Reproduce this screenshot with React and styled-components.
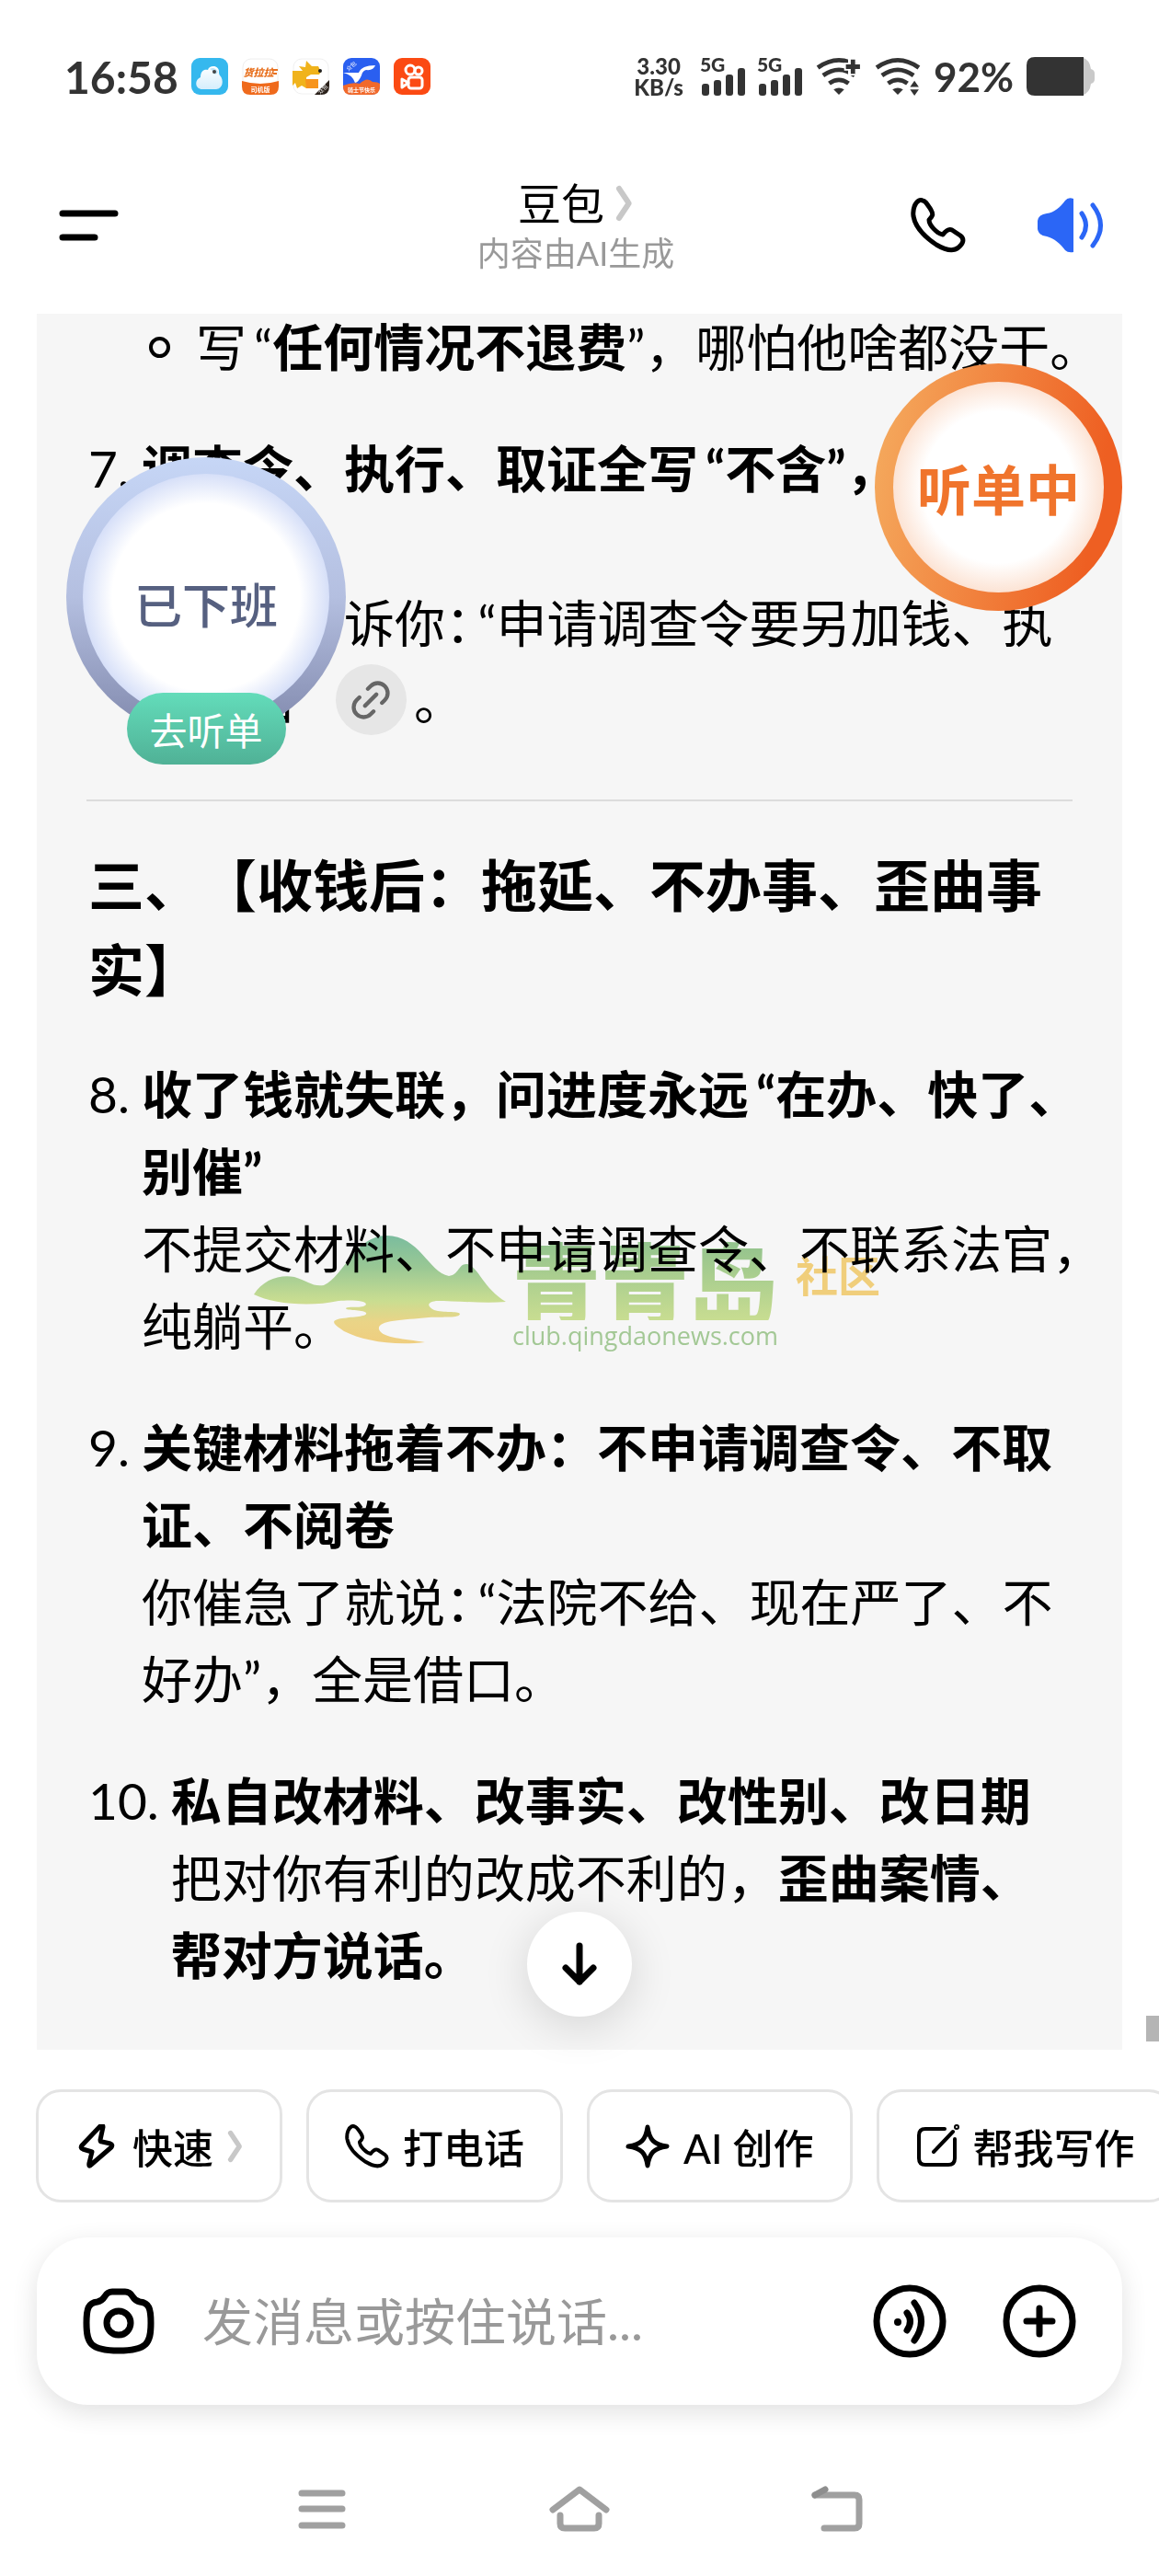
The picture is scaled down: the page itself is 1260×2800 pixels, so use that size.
import styled, { createGlobalStyle } from 'styled-components';
import { Link2 } from 'lucide-react';

const GlobalStyle = createGlobalStyle`
   * { box-sizing: border-box; }
   body {
      margin: 0;
      background: #fff;
      color: #000;
      font-family: Lato, "Noto Sans CJK SC", sans-serif;
      text-spacing-trim: space-all;
   }
   button, input { font-family: inherit; color: inherit; }
`;

const Chevron= ({ _height })=> (
   <svg width={_height / 2} height={_height} viewBox="0 0 20 40" fill="none" stroke="#c8c8c8" strokeWidth="6" strokeLinecap="round" strokeLinejoin="round">
      <path d="M4 4 L14 19 Q15 20 14 21 L4 36" />
   </svg>
);

const Phone= ({ _size, _stroke })=> (
   <svg width={_size} height={_size} viewBox="0 0 60 60" fill="none" stroke="currentColor" strokeWidth={_stroke} strokeLinejoin="round">
      <path d="M13 3 C16 3 18 7 22 13 C25 18 24 20 20 24 C20 30 29 39 35 40 C38 36 41 33 45 35 L54 41 C59 45 57 50 52 54 C46 59 38 57 28 51 C16 43 5 32 3 20 C2 12 5 5 9 3 Q11 2 13 3Z" />
   </svg>
);

const Signal= ()=> (
   <SignalBox>
      <SignalLabel>5G</SignalLabel>
      <svg width="48" height="30" viewBox="0 0 48 30" fill="#333">
         <rect x="0" y="17" width="8" height="13" rx="3" />
         <rect x="13" y="13" width="8" height="17" rx="3" />
         <rect x="26" y="7" width="8" height="23" rx="3" />
         <rect x="39" y="0" width="8" height="30" rx="3" />
      </svg>
   </SignalBox>
);

const Wifi= ({ _plus })=> (
   <svg width="50" height="42" viewBox="0 0 52 44" fill="none" stroke="#333" strokeWidth="5">
      <path d="M2 12 Q26 -5 50 12" />
      <path d="M8 21 Q26 8 44 21" />
      <path d="M15 30 Q26 22 37 30" />
      <path d="M20 37 Q26 33 32 37 L26 43Z" fill="#333" stroke="none" />
      {
         _plus &&
         <>
            <path d="M41 0 V21 M32 11 H52" stroke="#fff" strokeWidth="9" />
            <path d="M42 3 V19 M34 11 H50" />
         </>
      }
      {
         !_plus &&
         <path d="M40 34 L45 27 L50 34Z M40 37 H50 L45 44Z" fill="#333" stroke="none" />
      }
   </svg>
);

const App= ()=> (
   <Page>
      <GlobalStyle />
      <StatusBar>
         <StatusGroup>
            <Clock>16:58</Clock>
            <AppIcons>
               <svg width="40" height="40" viewBox="0 0 40 40">
                  <defs>
                     <linearGradient id="cloud" x1="0" y1="0" x2="0" y2="1">
                        <stop offset="0" stopColor="#fff" />
                        <stop offset="1" stopColor="#d5eefc" />
                     </linearGradient>
                  </defs>
                  <rect width="40" height="40" rx="9" fill="#35b8ee" />
                  <path d="M12 34 C4 34 3 24 10 21 C10 14 14 12 18 13 C19 8 29 7 30 14 C30 16 30 18 31 19 C36 24 34 34 27 34Z" fill="url(#cloud)" />
                  <path d="M20 12 Q25 9 29 15 Q27 19 24 17 Q23 13 20 12Z" fill="#bfe3f6" />
                  <circle cx="25" cy="15" r="2" fill="#444" />
               </svg>
               <svg width="40" height="40" viewBox="0 0 40 40">
                  <rect x="1" y="1" width="38" height="38" rx="9" fill="#fff" stroke="#eee" />
                  <path d="M0 25 Q20 31 40 25 V31 Q40 40 31 40 H9 Q0 40 0 31Z" fill="#ef6a1c" />
                  <text x="18" y="20" fontSize="11" fontWeight="900" fontStyle="italic" textAnchor="middle" fill="#e8701e">货拉拉</text>
                  <path d="M33 13 H39 M34 17 H38" stroke="#e8701e" strokeWidth="2" />
                  <text x="20" y="37" fontSize="7" fontWeight="700" textAnchor="middle" fill="#fff">司机版</text>
               </svg>
               <svg width="40" height="40" viewBox="0 0 40 40">
                  <rect x="1" y="1" width="38" height="38" rx="9" fill="#fff" stroke="#f0f0f0" />
                  <path d="M0 14 H11 L7 9 L14 10 L15 3 L21 9 L28 9 L31 15 L29 18 L20 18 L15 21 V33 L10 30 L5 33 L3 27 L0 30Z" fill="#f0b31c" />
                  <path d="M14 23 H28 V33 H15Z" fill="#f7941d" />
                  <circle cx="30" cy="14" r="2" fill="#222" />
                  <path d="M40 24 V31 Q40 40 31 40 H24 Z" fill="#2a211a" />
                  <text x="33" y="36" fontSize="6" transform="rotate(-45 33 34)" textAnchor="middle" fill="#fff">众包</text>
               </svg>
               <svg width="40" height="40" viewBox="0 0 40 40">
                  <rect width="40" height="40" rx="9" fill="#2a5ff0" />
                  <path d="M0 30 Q10 26 18 28 Q26 20 32 26 Q38 26 40 28 V31 Q40 40 31 40 H9 Q0 40 0 31Z" fill="#f1692b" />
                  <path d="M0 16 H17 Q20 8 35 8 Q33 14 25 13 Q21 14 20 19 Q17 26 13 27 Q10 18 0 16Z" fill="#fff" />
                  <text x="9" y="11" fontSize="6" transform="rotate(-40 9 9)" textAnchor="middle" fill="#fff">众包</text>
                  <text x="20" y="37" fontSize="6" fontWeight="700" textAnchor="middle" fill="#fff">骑士节快乐</text>
               </svg>
               <svg width="40" height="40" viewBox="0 0 40 40" fill="none" stroke="#fff" strokeWidth="3" strokeLinejoin="round">
                  <rect width="40" height="40" rx="9" fill="#fb4a13" stroke="none" />
                  <circle cx="18" cy="13" r="5" />
                  <circle cx="27" cy="14" r="4" />
                  <rect x="16" y="21" width="15" height="12" rx="3" />
                  <path d="M16 27 L9 23 V32 Z" />
               </svg>
            </AppIcons>
         </StatusGroup>
         <StatusGroup>
            <Speed><span>3.30</span><span>KB/s</span></Speed>
            <Signal />
            <Signal />
            <Wifi _plus={true} />
            <Wifi />
            <Percent>92%</Percent>
            <svg width="74" height="42" viewBox="0 0 74 42">
               <path d="M60 0 Q69 3 70 13 Q74 14 74 18 V24 Q74 28 70 29 Q69 39 60 42Z" fill="#c9c9c9" />
               <path d="M9 0 H62 V42 H9 Q0 42 0 33 V9 Q0 0 9 0Z" fill="#333" />
            </svg>
         </StatusGroup>
      </StatusBar>

      <Header>
         <IconButton aria-label="菜单">
            <svg width="78" height="34" viewBox="-12 0 78 34" stroke="#000" strokeWidth="7" strokeLinecap="round">
               <path d="M4 4 H61 M4 30 H39" />
            </svg>
         </IconButton>
         <TitleBlock>
            <Title>豆包<Chevron _height={40} /></Title>
            <Subtitle>内容由AI生成</Subtitle>
         </TitleBlock>
         <HeaderActions>
            <IconButton aria-label="打电话"><Phone _size={60} _stroke={5} /></IconButton>
            <IconButton aria-label="朗读">
               <svg width="72" height="60" viewBox="0 0 72 60" fill="none" stroke="#2b66f6" strokeWidth="5" strokeLinecap="round">
                  <path d="M10 17 Q1 18 0 25 V34 Q1 41 10 42 C18 44 25 50 30 57 Q33 60 39 59 V1 Q33 -1 30 3 C25 10 18 16 10 17Z" fill="#2b66f6" stroke="none" />
                  <path d="M48 17 Q57 30 48 43" />
                  <path d="M60 8 Q77 30 60 52" />
               </svg>
            </IconButton>
         </HeaderActions>
      </Header>

      <ChatArea>
         <Message>
            <BulletRow>
               <Bullet />
               <p>写<Quote $open>“</Quote><b>任何情况不退费</b><Quote>”</Quote>，哪怕他啥都没干。</p>
            </BulletRow>
            <List>
               <Item>
                  <span>7.</span>
                  <p>
                     <b>调查令、执行、取证全写<Quote $open>“</Quote>不含<Quote>”</Quote>，<br />后期再</b><br />
                     签完才告诉你<HalfWidth>：</HalfWidth><Quote $open>“</Quote>申请调查令要另加钱、执<br />
                     行另加<LinkChip href="#source" aria-label="来源"><Link2 size={52} strokeWidth={2} color="#666" /></LinkChip>。
                  </p>
               </Item>
            </List>
            <Divider />
            <SectionTitle>三、【收钱后：拖延、不办事、歪曲事<br />实】</SectionTitle>
            <List>
               <Item>
                  <span>8.</span>
                  <p>
                     <b>收了钱就失联，问进度永远<Quote $open>“</Quote>在办、快了、<br />别催<Quote>”</Quote></b><br />
                     不提交材料、不申请调查令、不联系法官，<br />纯躺平。
                  </p>
               </Item>
               <Item>
                  <span>9.</span>
                  <p>
                     <b>关键材料拖着不办：不申请调查令、不取<br />证、不阅卷</b><br />
                     你催急了就说<HalfWidth>：</HalfWidth><Quote $open>“</Quote>法院不给、现在严了、不<br />好办<Quote>”</Quote>，全是借口。
                  </p>
               </Item>
               <Item>
                  <span>10.</span>
                  <p>
                     <b>私自改材料、改事实、改性别、改日期</b><br />
                     把对你有利的改成不利的，<b>歪曲案情、<br />帮对方说话。</b>
                  </p>
               </Item>
            </List>
         </Message>

         <Watermark>
            <svg width="276" height="118" viewBox="0 0 276 118">
               <defs>
                  <linearGradient id="hill" x1="0" y1="0" x2="0" y2="1">
                     <stop offset="0" stopColor="#7fc3a4" />
                     <stop offset="0.3" stopColor="#a0d09a" />
                     <stop offset="0.6" stopColor="#d0e596" />
                     <stop offset="0.8" stopColor="#f3dc8c" />
                     <stop offset="1" stopColor="#f8d684" />
                  </linearGradient>
               </defs>
               <path d="M0 64 C10 48 28 42 44 45 C58 49 64 56 76 54 C98 44 110 0 144 0 C180 0 190 40 212 44 C224 42 222 30 232 31 C244 34 250 58 274 72 C250 74 220 71 198 71 C186 73 190 78 196 81 C206 84 222 82 224 85 C224 90 206 88 190 89 C160 92 134 92 136 102 C140 112 164 112 186 116 C150 120 118 114 98 104 C86 96 82 92 96 90 C110 88 124 88 122 84 C118 80 100 82 100 79 C104 76 118 80 122 75 C122 70 104 70 92 71 C60 78 20 74 0 64Z" fill="url(#hill)" />
            </svg>
            <div>
               <WatermarkName>青青岛</WatermarkName>
               <WatermarkSite>club.qingdaonews.com</WatermarkSite>
            </div>
            <WatermarkTag>社区</WatermarkTag>
         </Watermark>

         <ListeningBall>听单中</ListeningBall>
         <OffDutyBall>
            已下班
            <GoButton>去听单</GoButton>
         </OffDutyBall>
         <ScrollDown aria-label="回到底部">
            <svg width="42" height="48" viewBox="0 0 42 48" fill="none" stroke="#000" strokeWidth="7" strokeLinecap="round" strokeLinejoin="round">
               <path d="M21 4 V43 M6 28 L21 43 L36 28" />
            </svg>
         </ScrollDown>
         <ScrollThumb />
      </ChatArea>

      <Chips>
         <Chip>
            <svg width="48" height="48" viewBox="0 0 48 48" fill="none" stroke="#000" strokeWidth="5" strokeLinejoin="round">
               <path d="M31 3 L28 17 Q28 19 30 19 L39 21 Q42 22 40 25 L18 44 Q15 47 16 42 L19 30 L9 27 Q6 26 8 23 L28 2 Q31 0 31 3Z" />
            </svg>
            快速
            <Chevron _height={36} />
         </Chip>
         <Chip><Phone _size={48} _stroke={5} />打电话</Chip>
         <Chip>
            <svg width="48" height="48" viewBox="0 0 48 48" fill="none" stroke="#000" strokeWidth="5" strokeLinejoin="round">
               <path d="M24 3 C26 17 31 22 45 24 C31 26 26 31 24 45 C22 31 17 26 3 24 C17 22 22 17 24 3Z" />
            </svg>
            AI 创作
         </Chip>
         <Chip>
            <svg width="48" height="48" viewBox="0 0 48 48" fill="none" stroke="#000" strokeWidth="4" strokeLinecap="round">
               <path d="M32 5 H11 Q4 5 4 12 V37 Q4 44 11 44 H36 Q43 44 43 37 V16" />
               <path d="M41 8 L20 30" />
               <circle cx="45" cy="3" r="1" />
            </svg>
            帮我写作
         </Chip>
      </Chips>

      <InputBar>
         <IconButton aria-label="拍照">
            <svg width="78" height="72" viewBox="0 0 78 72" fill="none" stroke="#000" strokeWidth="7">
               <path d="M32 4 H46 Q51 4 54 9 Q57 14 62 15 C72 16 74 22 74 38 C74 60 70 68 39 68 C8 68 4 60 4 38 C4 22 6 16 16 15 Q21 14 24 9 Q27 4 32 4Z" />
               <circle cx="39" cy="38" r="13" />
            </svg>
         </IconButton>
         <TextField type="text" aria-label="发消息" placeholder="发消息或按住说话..." />
         <InputActions>
            <IconButton aria-label="语音">
               <svg width="80" height="80" viewBox="0 0 80 80" fill="none" stroke="#000" strokeWidth="7" strokeLinecap="round">
                  <circle cx="40" cy="40" r="36" />
                  <circle cx="27" cy="41" r="4" fill="#000" stroke="none" />
                  <path d="M37 31 Q44 40 37 50" />
                  <path d="M45 20 Q60 40 45 61" />
               </svg>
            </IconButton>
            <IconButton aria-label="更多">
               <svg width="80" height="80" viewBox="0 0 80 80" fill="none" stroke="#000" strokeWidth="7" strokeLinecap="round">
                  <circle cx="40" cy="40" r="36" />
                  <path d="M40 26 V54 M26 40 H54" />
               </svg>
            </IconButton>
         </InputActions>
      </InputBar>

      <SystemNav>
         <IconButton aria-label="最近任务">
            <svg width="54" height="50" viewBox="0 0 54 50" stroke="#a0a0a0" strokeWidth="7" strokeLinecap="round">
               <path d="M5 8 H49 M5 25 H49 M5 43 H49" />
            </svg>
         </IconButton>
         <IconButton aria-label="主页">
            <svg width="66" height="50" viewBox="0 0 66 50" fill="none" stroke="#a0a0a0" strokeWidth="7" strokeLinecap="round" strokeLinejoin="round">
               <path d="M4 26 L33 4 L62 26" />
               <path d="M12 32 V41 Q12 46 17 46 H49 Q54 46 54 41 V32" />
            </svg>
         </IconButton>
         <IconButton aria-label="返回">
            <svg width="56" height="50" viewBox="0 0 56 50" fill="none" stroke="#a0a0a0" strokeWidth="7" strokeLinecap="round">
               <path d="M14 46 H47 Q52 46 52 41 V15 Q52 10 47 10 H4" />
               <path d="M4 10 L15 4" stroke="#8e8e8e" />
            </svg>
         </IconButton>
      </SystemNav>
   </Page>
);

export default App;

const Page = styled.div`
   display: flex;
   flex-direction: column;
   overflow-x: hidden;
`;

const StatusBar = styled.div`
   display: flex;
   align-items: center;
   justify-content: space-between;
   height: 166px;
   padding: 0 70px;
   color: #333;
`;

const StatusGroup = styled.div`
   display: flex;
   align-items: center;
   gap: 14px;
`;

const Clock = styled.span`
   font-size: 48px;
   font-weight: 700;
`;

const AppIcons = styled.div`
   display: flex;
   gap: 15px;
`;

const Speed = styled.div`
   display: flex;
   flex-direction: column;
   align-items: center;
   margin-right: 6px;
   font-size: 24px;
   line-height: 23px;
   font-weight: 900;
`;

const SignalBox = styled.div`
   display: flex;
   flex-direction: column;
   height: 42px;
   position: relative;
   & svg {
      margin-top: auto;
   }
`;

const SignalLabel = styled.span`
   position: absolute;
   top: 0;
   left: -2px;
   font-size: 21px;
   line-height: 16px;
   font-weight: 900;
`;

const Percent = styled.span`
   font-size: 44px;
   font-weight: 700;
`;

const Header = styled.header`
   display: grid;
   grid-template-columns: 1fr auto 1fr;
   align-items: center;
   height: 175px;
   padding: 0 60px 18px 52px;
`;

const IconButton = styled.button`
   display: flex;
   align-items: center;
   padding: 0;
   border: none;
   background: none;
   cursor: pointer;
`;

const TitleBlock = styled.div`
   display: flex;
   flex-direction: column;
   align-items: center;
   gap: 4px;
`;

const Title = styled.h1`
   display: flex;
   align-items: center;
   gap: 12px;
   margin: 0;
   font-size: 47px;
   line-height: 56px;
   font-weight: 400;
`;

const Subtitle = styled.span`
   color: #999;
   font-size: 36px;
   line-height: 44px;
`;

const HeaderActions = styled.div`
   display: flex;
   align-items: center;
   justify-content: flex-end;
   gap: 78px;
`;

const ChatArea = styled.main`
   position: relative;
`;

const Message = styled.article`
   margin: 0 40px;
   padding: 0 56px 61px;
   background: #f6f6f6;
   overflow: hidden;
   font-size: 55px;
   line-height: 84px;
   white-space: nowrap;
   & p {
      margin: 0;
   }
`;

const BulletRow = styled.div`
   display: flex;
   align-items: center;
   gap: 28px;
   margin-top: -6px;
   padding-left: 66px;
`;

const Bullet = styled.span`
   flex: none;
   width: 23px;
   height: 23px;
   border: 4px solid #000;
   border-radius: 50%;
`;

const List = styled.ol`
   margin: 0;
   padding: 0;
   list-style: none;
`;

const Item = styled.li`
   display: flex;
   gap: 13px;
   & + & {
      margin-top: 48px;
   }
   ${BulletRow} + ${List} & {
      margin-top: 48px;
   }
`;

const Quote = styled.span`
   padding-left: ${({ $open })=> $open ? '8px' : '0'};
`;

const HalfWidth = styled.span`
   font-feature-settings: "halt";
`;

const LinkChip = styled.a`
   display: inline-flex;
   align-items: center;
   justify-content: center;
   width: 77px;
   height: 77px;
   margin: 3px 8px 0 46px;
   border-radius: 50%;
   background: #e6e6e6;
   vertical-align: top;
   & svg {
      transform: rotate(-45deg);
   }
`;

const Divider = styled.hr`
   margin: 66px -2px 46px;
   border: none;
   border-top: 2px solid #dcdcdc;
`;

const SectionTitle = styled.h2`
   margin: 0 0 46px;
   font-size: 61px;
   line-height: 92px;
   font-weight: 700;
`;

const Watermark = styled.div`
   display: flex;
   position: absolute;
   top: 1002px;
   left: 276px;
   gap: 5px;
   mix-blend-mode: multiply;
   pointer-events: none;
`;

const WatermarkName = styled.div`
   padding-top: 12px;
   font-size: 96px;
   line-height: 80px;
   font-weight: 900;
   background: linear-gradient(#93c892, #d0e596);
   background-clip: text;
   color: transparent;
`;

const WatermarkSite = styled.div`
   color: #a9d09b;
   font-family: "Open Sans", sans-serif;
   font-size: 27px;
   line-height: 34px;
`;

const WatermarkTag = styled.div`
   padding: 20px 0 0 14px;
   color: #f9d680;
   font-size: 46px;
   line-height: 48px;
   font-weight: 700;
`;

const Ball = styled.div`
   display: flex;
   align-items: center;
   justify-content: center;
   position: absolute;
   border-radius: 50%;
   border: solid transparent;
`;

const ListeningBall = styled(Ball)`
   top: 54px;
   right: 40px;
   width: 269px;
   height: 269px;
   border-width: 20px;
   background:
      radial-gradient(circle closest-side, #fff 72%, #fce3d4) padding-box,
      linear-gradient(100deg, #f5ad60, #ee5f22 85%) border-box;
   color: #f0742c;
   font-size: 59px;
   font-weight: 700;
`;

const OffDutyBall = styled(Ball)`
   top: 156px;
   left: 72px;
   width: 304px;
   height: 304px;
   border-width: 18px;
   background:
      radial-gradient(circle closest-side, #fff 76%, #d6dff8) padding-box,
      linear-gradient(#c6d6f6, #b4bfe0 50%, #7f87ab) border-box;
   color: #566080;
   font-size: 52px;
   font-weight: 500;
   padding-top: 12px;
`;

const GoButton = styled.button`
   position: absolute;
   bottom: -48px;
   width: 173px;
   height: 78px;
   padding: 0;
   border: none;
   border-radius: 39px;
   background: linear-gradient(#63dcba, #50b196);
   color: #fff;
   font-size: 41px;
   cursor: pointer;
`;

const ScrollDown = styled.button`
   display: flex;
   align-items: center;
   justify-content: center;
   position: absolute;
   bottom: 36px;
   left: calc(50% - 57px);
   width: 114px;
   height: 114px;
   padding: 0;
   border: none;
   border-radius: 50%;
   background: #fff;
   box-shadow: 0 10px 50px rgba(0, 0, 0, 0.14);
   cursor: pointer;
`;

const ScrollThumb = styled.div`
   position: absolute;
   right: 0;
   bottom: 9px;
   width: 14px;
   height: 28px;
   background: #b5b5b5;
`;

const Chips = styled.div`
   display: flex;
   gap: 26px;
   padding: 43px 0 38px 39px;
   overflow: hidden;
`;

const Chip = styled.button`
   display: flex;
   flex: none;
   align-items: center;
   gap: 15px;
   height: 123px;
   padding: 0 39px;
   border: 3px solid #e4e4e4;
   border-radius: 27px;
   background: #fff;
   font-size: 44px;
   font-weight: 500;
   white-space: nowrap;
   cursor: pointer;
`;

const InputBar = styled.div`
   display: flex;
   align-items: center;
   height: 182px;
   margin: 0 40px;
   padding: 0 50px;
   border-radius: 56px;
   background: #fff;
   box-shadow: 0 8px 28px rgba(0, 0, 0, 0.12);
`;

const TextField = styled.input`
   flex: 1;
   min-width: 0;
   margin-left: 52px;
   padding: 0;
   border: none;
   outline: none;
   background: none;
   font-size: 55px;
   line-height: 84px;
   &::placeholder {
      color: #999;
      opacity: 1;
   }
`;

const InputActions = styled.div`
   display: flex;
   gap: 61px;
`;

const SystemNav = styled.nav`
   display: grid;
   grid-template-columns: repeat(3, 1fr);
   justify-items: center;
   width: 66.66%;
   margin: 0 auto;
   padding: 88px 0 48px;
`;
